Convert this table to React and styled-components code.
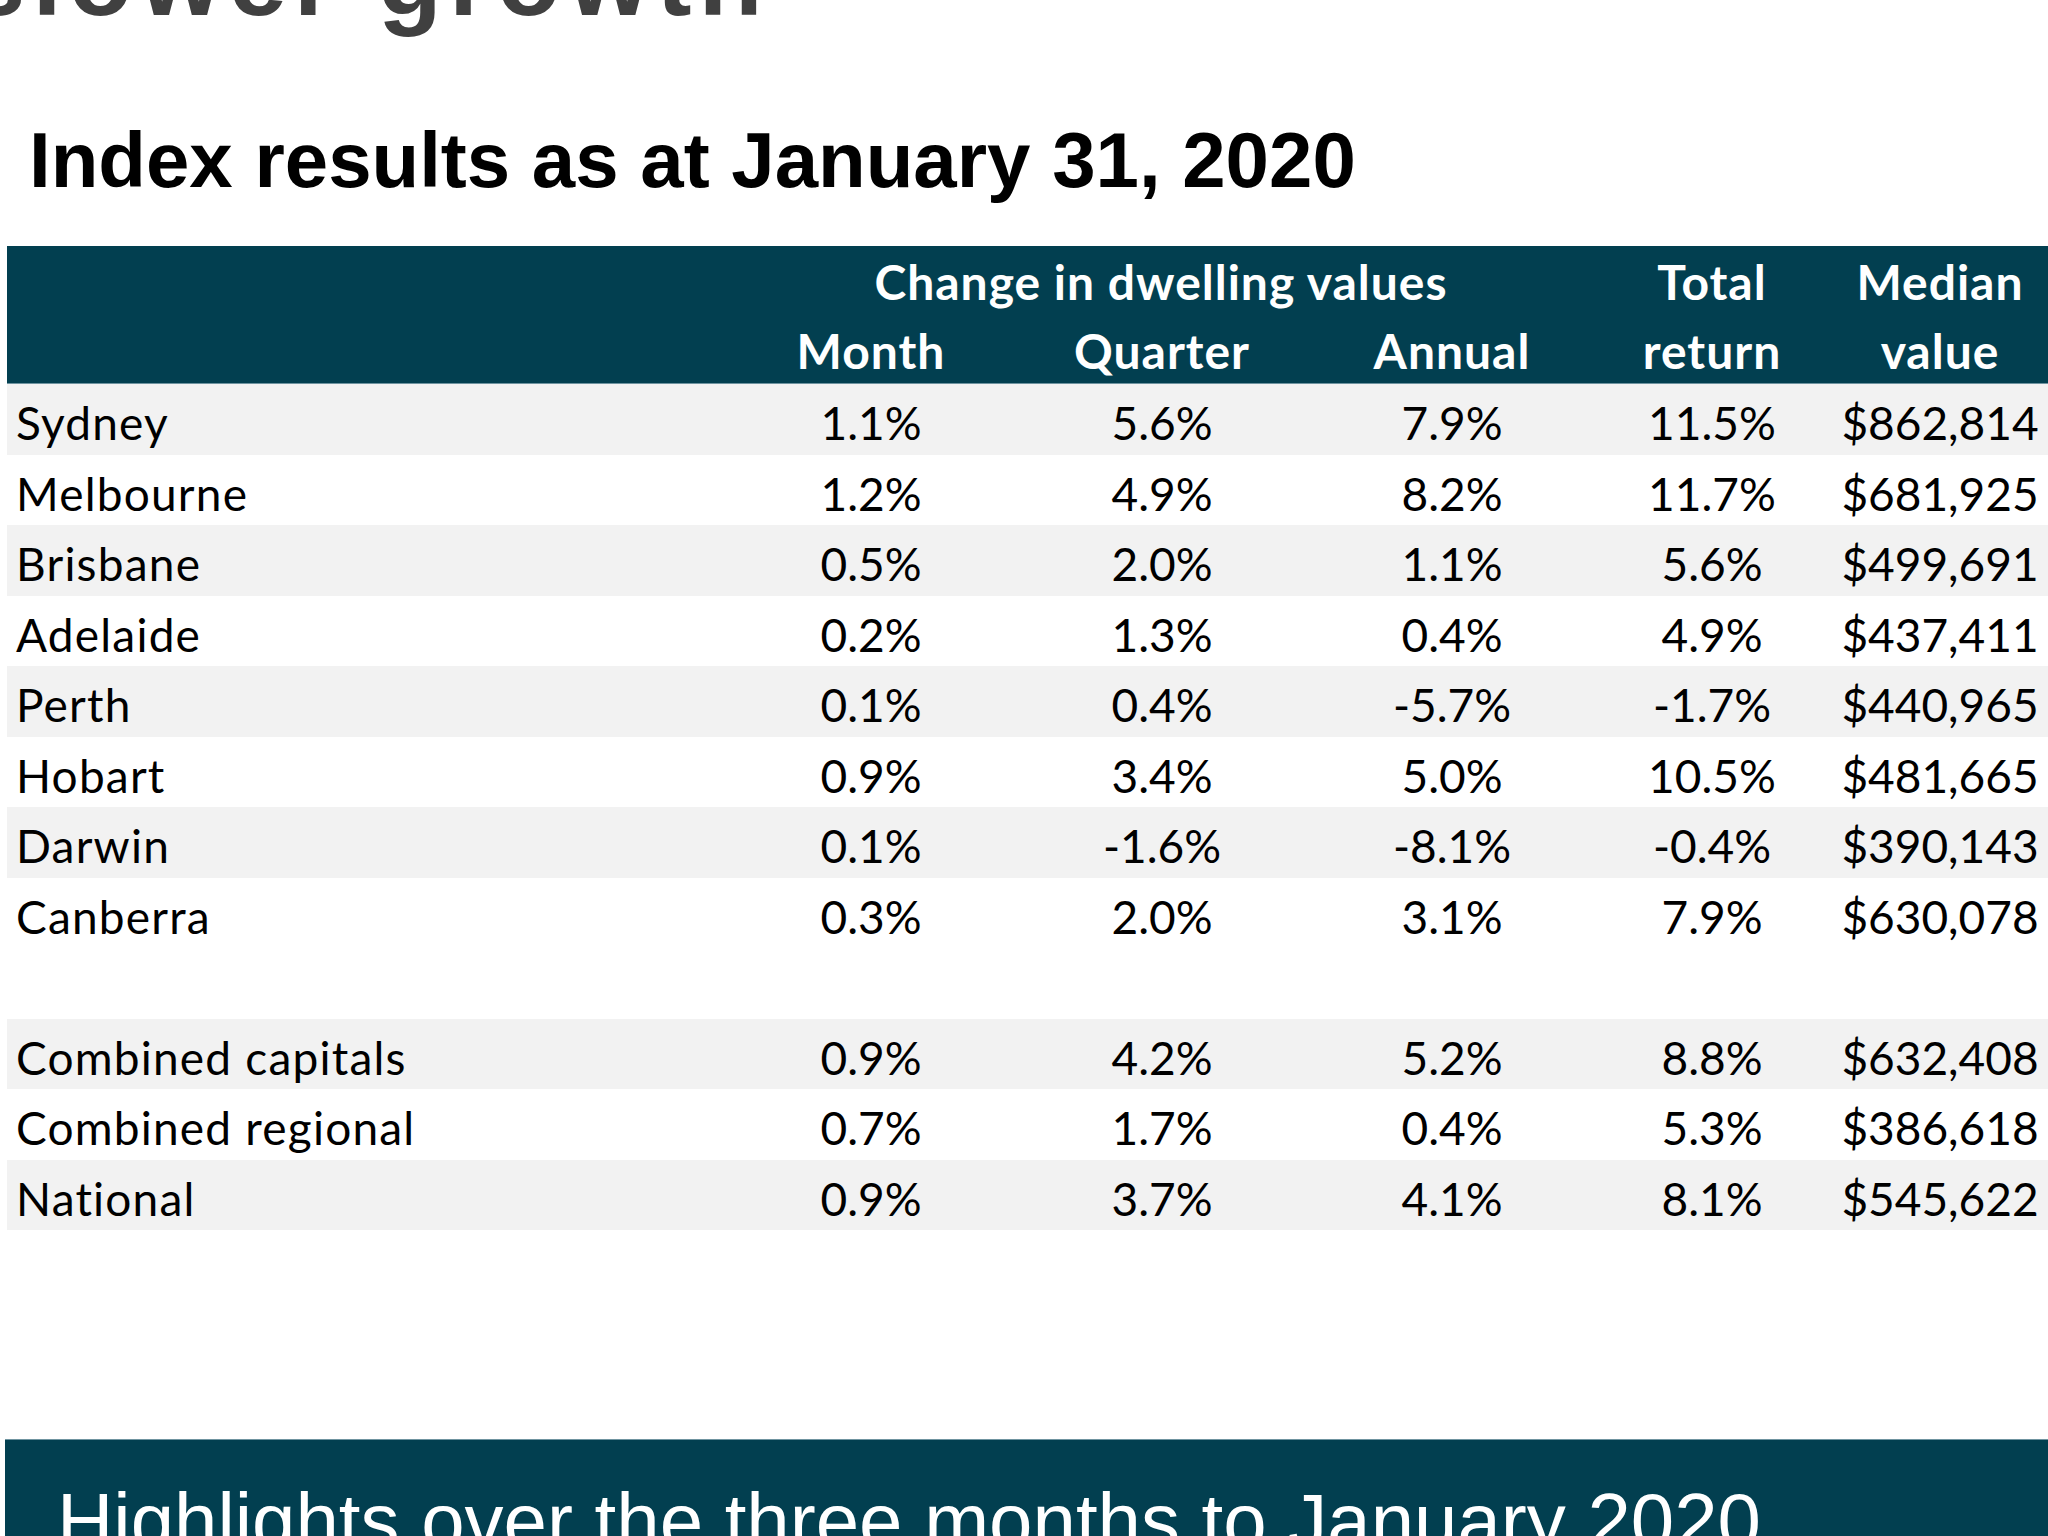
import React from "react";
import styled, { createGlobalStyle } from "styled-components";

const Global = createGlobalStyle`
  html, body { margin: 0; padding: 0; background: #ffffff; }
  body { overflow: hidden; }
`;

const TEAL = "#023f50";

const Page = styled.div`
  display: flex;
  flex-direction: column;
  width: 2048px;
  height: 1536px;
  overflow: hidden;
`;

const CutTitle = styled.div`
  margin: -74px 0 0 -33px;
  font-family: "Liberation Sans", Arial, sans-serif;
  font-weight: 700;
  font-size: 105px;
  line-height: 105px;
  letter-spacing: 7px;
  color: #404040;
  white-space: nowrap;
`;

const Heading = styled.h1`
  margin: 91px 0 0 0;
  padding-left: 29px;
  font-family: "Liberation Sans", Arial, sans-serif;
  font-weight: 700;
  font-size: 78px;
  line-height: 77px;
  color: #000000;
  white-space: nowrap;
`;

const COLS = "723px 282px 300px 280px 240px 216px";

const Table = styled.div`
  margin: 47px 0 0 7px;
  width: 2041px;
  display: flex;
  flex-direction: column;
  font-family: Lato, "Open Sans", sans-serif;
  font-size: 46px;
`;

const HeadBand = styled.div`
  background: ${TEAL};
  border-bottom: 1px solid #6f94a0;
  display: grid;
  grid-template-columns: ${COLS};
  grid-template-rows: 69px 68px;
  color: #ffffff;
  font-weight: 700;
  font-size: 48px;
  letter-spacing: 1px;
`;

const HeadCell = styled.div`
  grid-column: ${(p) => p.$col};
  grid-row: ${(p) => p.$row};
  text-align: center;
  padding-top: 2px;
  line-height: 67px;
  white-space: nowrap;
`;

const Row = styled.div`
  display: grid;
  grid-template-columns: ${COLS};
  height: 70.5px;
  background: ${(p) => (p.$shade ? "#f2f2f2" : "#ffffff")};
  color: #000000;
`;

const NameCell = styled.div`
  padding: 8px 0 0 9px;
  line-height: 62.5px;
  letter-spacing: 1.2px;
  white-space: nowrap;
`;

const ValueCell = styled.div`
  padding-top: 8px;
  line-height: 62.5px;
  text-align: center;
  white-space: nowrap;
`;

const BottomBand = styled.div`
  margin: 209px 0 0 5px;
  background: ${TEAL};
  border-top: 1px solid #6f94a0;
  height: 200px;
  padding: 42px 0 0 52px;
  box-sizing: border-box;
`;

const BandText = styled.div`
  font-family: "Liberation Sans", Arial, sans-serif;
  font-weight: 400;
  font-size: 78px;
  line-height: 78px;
  color: #ffffff;
  white-space: nowrap;
`;

const rows = [
  { name: "Sydney", v: ["1.1%", "5.6%", "7.9%", "11.5%", "$862,814"], shade: true },
  { name: "Melbourne", v: ["1.2%", "4.9%", "8.2%", "11.7%", "$681,925"], shade: false },
  { name: "Brisbane", v: ["0.5%", "2.0%", "1.1%", "5.6%", "$499,691"], shade: true },
  { name: "Adelaide", v: ["0.2%", "1.3%", "0.4%", "4.9%", "$437,411"], shade: false },
  { name: "Perth", v: ["0.1%", "0.4%", "-5.7%", "-1.7%", "$440,965"], shade: true },
  { name: "Hobart", v: ["0.9%", "3.4%", "5.0%", "10.5%", "$481,665"], shade: false },
  { name: "Darwin", v: ["0.1%", "-1.6%", "-8.1%", "-0.4%", "$390,143"], shade: true },
  { name: "Canberra", v: ["0.3%", "2.0%", "3.1%", "7.9%", "$630,078"], shade: false },
  { name: "", v: ["", "", "", "", ""], shade: false },
  { name: "Combined capitals", v: ["0.9%", "4.2%", "5.2%", "8.8%", "$632,408"], shade: true },
  { name: "Combined regional", v: ["0.7%", "1.7%", "0.4%", "5.3%", "$386,618"], shade: false },
  { name: "National", v: ["0.9%", "3.7%", "4.1%", "8.1%", "$545,622"], shade: true },
];

export default function App() {
  return (
    <Page>
      <Global />
      <CutTitle>slower growth</CutTitle>
      <Heading>Index results as at January 31, 2020</Heading>
      <Table>
        <HeadBand>
          <HeadCell $col="2 / 5" $row="1">Change in dwelling values</HeadCell>
          <HeadCell $col="5" $row="1">Total</HeadCell>
          <HeadCell $col="6" $row="1">Median</HeadCell>
          <HeadCell $col="2" $row="2">Month</HeadCell>
          <HeadCell $col="3" $row="2">Quarter</HeadCell>
          <HeadCell $col="4" $row="2">Annual</HeadCell>
          <HeadCell $col="5" $row="2">return</HeadCell>
          <HeadCell $col="6" $row="2">value</HeadCell>
        </HeadBand>
        {rows.map((r, i) => (
          <Row key={i} $shade={r.shade}>
            <NameCell>{r.name}</NameCell>
            {r.v.map((x, j) => (
              <ValueCell key={j}>{x}</ValueCell>
            ))}
          </Row>
        ))}
      </Table>
      <BottomBand>
        <BandText>Highlights over the three months to January 2020</BandText>
      </BottomBand>
    </Page>
  );
}
